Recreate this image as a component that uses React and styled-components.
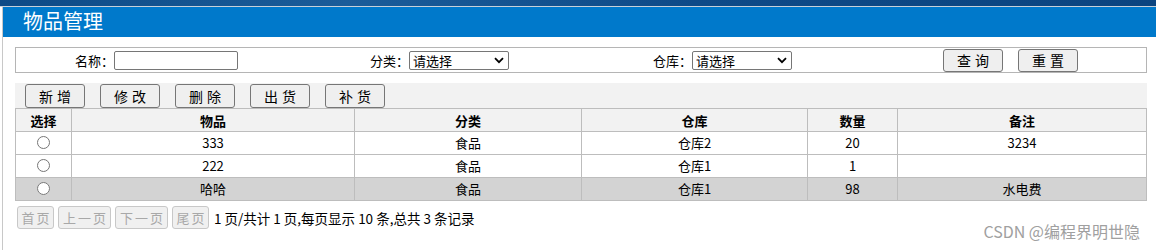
import React from "react";
import styled, { createGlobalStyle } from "styled-components";

const GlobalStyle = createGlobalStyle`
  body {
    margin: 0;
    background: #fff;
    font-family: "Noto Sans CJK SC", "Noto Sans", sans-serif;
    font-size: 13px;
    color: #000;
  }
`;

const Screen = styled.div`
  position: relative;
  width: 1156px;
  height: 250px;
  overflow: hidden;
`;

const TopStrip = styled.div`
  height: 6px;
  background: linear-gradient(90deg, #0d4a86 0%, #1a5c9a 30%, #0e4a88 60%, #0b4480 100%);
  border-bottom: 1px solid #c7d0d9;
`;

const Page = styled.div`
  margin-left: 2px;
  border-left: 1px solid #c8c8c8;
  height: 243px;
`;

const Header = styled.div`
  height: 30px;
  background: #0079cb;
  color: #fff;
  font-size: 20px;
  line-height: 28px;
  padding-left: 20px;
`;

const Body = styled.div`
  padding: 10px 0 0 12px;
  width: 1132px;
`;

const SearchBox = styled.div`
  display: grid;
  grid-template-columns: 98px 186px 109px 181px 102px 238px 1fr;
  align-items: center;
  height: 24px;
  border: 1px solid #b5b5b5;
`;

const Label = styled.span`
  text-align: right;
  white-space: nowrap;
`;

const TextInput = styled.input`
  box-sizing: border-box;
  width: 124px;
  height: 19px;
  border: 1px solid #767676;
  border-radius: 2px;
  padding: 0 2px;
`;

const SelectWrap = styled.div`
  position: relative;
  width: 100px;
  height: 19px;
`;

const Select = styled.select`
  appearance: none;
  box-sizing: border-box;
  width: 100px;
  height: 19px;
  font-family: inherit;
  font-size: 13px;
  line-height: 17px;
  color: #000;
  border: 1px solid #767676;
  border-radius: 2px;
  padding: 0 0 0 3px;
  background: #fff;
`;

const Chevron = styled.svg`
  position: absolute;
  right: 5px;
  top: 6px;
  pointer-events: none;
`;

const ButtonCell = styled.div`
  display: flex;
  gap: 15px;
  padding-left: 13px;
`;

const Btn = styled.button`
  box-sizing: border-box;
  width: 60px;
  height: ${(p) => p.h || 24}px;
  padding: 0;
  font-family: inherit;
  font-size: 14px;
  letter-spacing: 4px;
  text-indent: 4px;
  white-space: nowrap;
  color: #000;
  background: #efefef;
  border: 1px solid #767676;
  border-radius: 3px;
`;

const Toolbar = styled.div`
  display: flex;
  gap: 15px;
  height: 25px;
  margin-top: 10px;
  padding-left: 10px;
  background: #f2f2f2;
  align-items: flex-end;
`;

const Table = styled.table`
  width: 1132px;
  border-collapse: collapse;
  table-layout: fixed;
`;

const Th = styled.th`
  height: 22px;
  padding: 0;
  border: 1px solid #bdbdbd;
  background: #f2f2f2;
  font-weight: bold;
  font-size: 13px;
  text-align: center;
`;

const Tr = styled.tr`
  background: ${(p) => (p.$selected ? "#d3d3d3" : "#fff")};
`;

const Td = styled.td`
  height: 22px;
  padding: 0;
  border: 1px solid #bdbdbd;
  text-align: center;
  line-height: 20px;
`;

const Radio = styled.input`
  margin: 0;
  width: 13px;
  height: 13px;
  vertical-align: -1px;
`;

const Pager = styled.div`
  display: flex;
  align-items: center;
  gap: 4px;
  margin-top: 5px;
  padding-left: 2px;
`;

const PageBtn = styled.button`
  box-sizing: border-box;
  width: ${(p) => p.w}px;
  height: 23px;
  padding: 0;
  font-family: inherit;
  font-size: 13px;
  letter-spacing: 2px;
  text-indent: 2px;
  white-space: nowrap;
  color: #a8a8a8;
  background: #f0f0f0;
  border: 1px solid #c8c8c8;
  border-radius: 3px;
`;

const PageInfo = styled.span`
  margin-left: 1px;
  font-size: 13.5px;
`;

const Watermark = styled.div`
  position: absolute;
  right: 16px;
  bottom: 7px;
  font-size: 16px;
  color: #a0a0a0;
  text-shadow: 0 0 1px #fff;
`;

const rows = [
  { name: "333", type: "食品", store: "仓库2", count: "20", note: "3234" },
  { name: "222", type: "食品", store: "仓库1", count: "1", note: "" },
  { name: "哈哈", type: "食品", store: "仓库1", count: "98", note: "水电费", selected: true },
];

const Dropdown = () => (
  <SelectWrap>
    <Select>
      <option>请选择</option>
    </Select>
    <Chevron width="10" height="7" viewBox="0 0 10 7">
      <path d="M1 1.2 L5 5.2 L9 1.2" fill="none" stroke="#000" strokeWidth="1.8" />
    </Chevron>
  </SelectWrap>
);

const App = () => (
  <>
    <GlobalStyle />
    <Screen>
      <TopStrip />
      <Page>
        <Header>物品管理</Header>
        <Body>
          <SearchBox>
            <Label>名称：</Label>
            <div>
              <TextInput type="text" />
            </div>
            <Label>分类：</Label>
            <Dropdown />
            <Label>仓库：</Label>
            <Dropdown />
            <ButtonCell>
              <Btn h={23}>查询</Btn>
              <Btn h={23}>重置</Btn>
            </ButtonCell>
          </SearchBox>
          <Toolbar>
            <Btn>新增</Btn>
            <Btn>修改</Btn>
            <Btn>删除</Btn>
            <Btn>出货</Btn>
            <Btn>补货</Btn>
          </Toolbar>
          <Table>
            <colgroup>
              <col style={{ width: 56 }} />
              <col style={{ width: 283 }} />
              <col style={{ width: 227 }} />
              <col style={{ width: 226 }} />
              <col style={{ width: 90 }} />
              <col />
            </colgroup>
            <thead>
              <tr>
                <Th>选择</Th>
                <Th>物品</Th>
                <Th>分类</Th>
                <Th>仓库</Th>
                <Th>数量</Th>
                <Th>备注</Th>
              </tr>
            </thead>
            <tbody>
              {rows.map((r) => (
                <Tr key={r.name} $selected={r.selected}>
                  <Td>
                    <Radio type="radio" name="pick" />
                  </Td>
                  <Td>{r.name}</Td>
                  <Td>{r.type}</Td>
                  <Td>{r.store}</Td>
                  <Td>{r.count}</Td>
                  <Td>{r.note}</Td>
                </Tr>
              ))}
            </tbody>
          </Table>
          <Pager>
            <PageBtn w={37} disabled>首页</PageBtn>
            <PageBtn w={53} disabled>上一页</PageBtn>
            <PageBtn w={53} disabled>下一页</PageBtn>
            <PageBtn w={37} disabled>尾页</PageBtn>
            <PageInfo>1 页/共计 1 页,每页显示 10 条,总共 3 条记录</PageInfo>
          </Pager>
        </Body>
      </Page>
      <Watermark>CSDN @编程界明世隐</Watermark>
    </Screen>
  </>
);

export default App;
